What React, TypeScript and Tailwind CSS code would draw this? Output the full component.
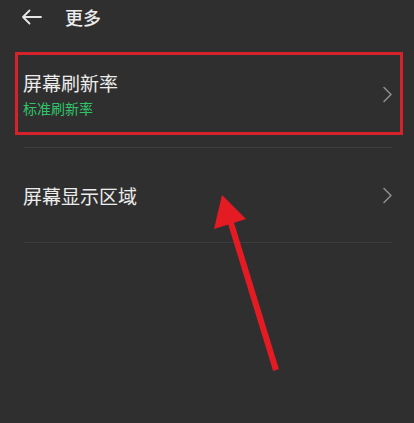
import React from 'react';

const font = { fontFamily: '"Noto Sans CJK SC", "Noto Sans", sans-serif' };

const Chevron: React.FC = () => (
  <svg width="11" height="17" viewBox="0 0 11 17" fill="none" className="shrink-0">
    <path d="M2 1.5 L9 8.5 L2 15.5" stroke="#8c8c8c" strokeWidth="1.6" strokeLinecap="round" strokeLinejoin="round" />
  </svg>
);

const App: React.FC = () => {
  return (
    <div className="relative w-[414px] h-[423px] overflow-hidden bg-[#2f2f2f] text-[#ececec]" style={font}>
      {/* Header */}
      <div className="flex items-center h-[34px] pl-[21px]">
        <svg width="21" height="16" viewBox="0 0 21 16" fill="none">
          <path d="M20 8 H2 M8.5 1.5 L2 8 L8.5 14.5" stroke="#e6e6e6" strokeWidth="1.8" strokeLinecap="round" strokeLinejoin="round" />
        </svg>
        <span className="ml-[23px] text-[18px] font-medium leading-none">更多</span>
      </div>

      {/* List */}
      <div className="mt-[18px]">
        <div className="flex items-center justify-between pl-[23px] pr-[21px] pt-[18px] pb-[30px] mx-0">
          <div className="flex flex-col gap-[4px]">
            <span className="text-[19px] leading-[25px]">屏幕刷新率</span>
            <span className="text-[14px] leading-[18px] text-[#2fc46a]">标准刷新率</span>
          </div>
          <div className="mt-[2px]"><Chevron /></div>
        </div>
        <div className="ml-[24px] mr-[22px] h-px bg-[#3d3d3d]" />
        <div className="flex items-center justify-between pl-[23px] pr-[21px] pt-[35px] pb-[34px]">
          <span className="text-[19px] leading-[25px]">屏幕显示区域</span>
          <Chevron />
        </div>
        <div className="ml-[24px] mr-[22px] h-px bg-[#3d3d3d]" />
      </div>

      {/* Annotation: red box */}
      <div className="absolute left-[15px] top-[52px] w-[388px] h-[83px] border-[3px] border-[#d6232b]" />

      {/* Annotation: red arrow */}
      <svg className="absolute inset-0 pointer-events-none" width="414" height="423" viewBox="0 0 414 423">
        <line x1="276" y1="370" x2="230" y2="220" stroke="#e51b24" strokeWidth="6" />
        <polygon points="222,195 214,229 246,219" fill="#e51b24" />
      </svg>
    </div>
  );
};

export default App;
